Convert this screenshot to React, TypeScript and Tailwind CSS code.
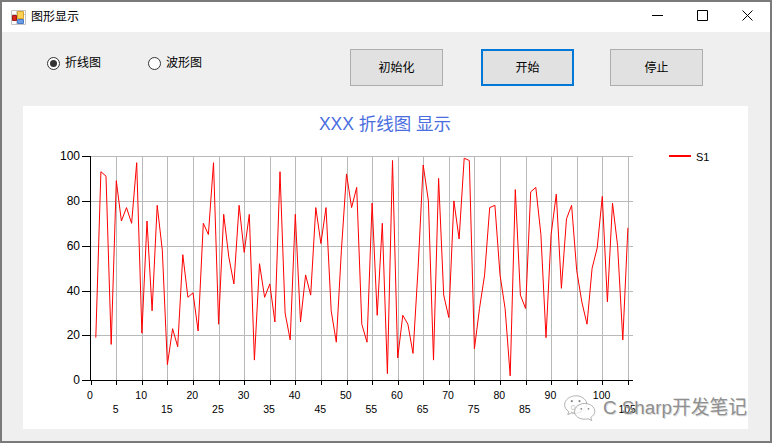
const data = [19,93,91,16,89,71,77,70,97,21,71,31,78,58,7,23,15,56,37,39,22,70,65,97,25,74,55,43,78,57,74,9,52,37,43,26,93,30,18,74,26,47,38,77,61,77,31,17,58,92,77,86,25,17,79,29,70,3,98,10,29,25,12,50,96,80,9,90,38,28,80,63,99,98,14,32,47,77,78,47,32,2,85,38,32,84,86,65,19,65,83,41,72,78,49,35,25,50,59,82,35,79,60,18,68];

const X0 = 90.7;
const UX = 5.116;
const Y0 = 380.3;
const UY = 2.243;
const px = (v: number) => X0 + v * UX;
const py = (v: number) => Y0 - v * UY;
const font = '"Liberation Sans", Arial, sans-serif';

function Chart() {
  const xs = Array.from({ length: 22 }, (_, i) => i * 5);
  const ys = [0, 20, 40, 60, 80, 100];
  return (
    <svg width="725" height="323" viewBox="23 106 725 323" className="block">
      <text x="385" y="129.500" textAnchor="middle" fontSize="17.500" fill="#4a6ee0" style={{ fontFamily: '"Liberation Sans", "Noto Sans CJK SC", sans-serif' }}>XXX 折线图 显示</text>
      {xs.slice(1).map((v) => (
        <line key={v} x1={Math.round(px(v)) + 0.5} x2={Math.round(px(v)) + 0.5} y1={156} y2={380} stroke="#b9b9b9" shapeRendering="crispEdges" />
      ))}
      {ys.slice(1).map((v) => (
        <line key={v} x1={91} x2={632.5} y1={Math.round(py(v)) + 0.5} y2={Math.round(py(v)) + 0.5} stroke="#b9b9b9" shapeRendering="crispEdges" />
      ))}
      <line x1={90.5} x2={90.5} y1={156} y2={381} stroke="#000" shapeRendering="crispEdges" />
      <line x1={90} x2={632.5} y1={380.5} y2={380.5} stroke="#000" shapeRendering="crispEdges" />
      {ys.map((v) => (
        <g key={v}>
          <line x1={82} x2={90} y1={Math.round(py(v)) + 0.5} y2={Math.round(py(v)) + 0.5} stroke="#000" shapeRendering="crispEdges" />
          <text x={80} y={Math.round(py(v)) + 3.5} textAnchor="end" fontSize="12" fill="#000" style={{ fontFamily: font }}>{v}</text>
        </g>
      ))}
      {xs.map((v, i) => (
        <g key={v}>
          <line x1={Math.round(px(v)) + 0.5} x2={Math.round(px(v)) + 0.5} y1={381} y2={385} stroke="#000" shapeRendering="crispEdges" />
          <text x={px(v) - 0.7} y={i % 2 === 0 ? 399 : 413} textAnchor="middle" fontSize="10.500" fill="#000" style={{ fontFamily: font }}>{v}</text>
        </g>
      ))}
      <polyline fill="none" stroke="#ff0000" strokeWidth="1" points={data.map((v, i) => `${px(i + 1).toFixed(1)},${py(v).toFixed(1)}`).join(' ')} />
      <line x1={669} x2={691} y1={156} y2={156} stroke="#ff0000" strokeWidth="2" />
      <text x={696} y={161} fontSize="11" fill="#000" style={{ fontFamily: font }}>S1</text>
    </svg>
  );
}

function Radio({ checked, label }: { checked?: boolean; label: string }) {
  return (
    <div className="flex items-center gap-[5px]">
      <span className="w-[13px] h-[13px] rounded-full border border-[#333333] bg-white flex items-center justify-center">
        {checked && <span className="w-[7px] h-[7px] rounded-full bg-[#333333]" />}
      </span>
      <span className="text-[12px] leading-[16px] text-black">{label}</span>
    </div>
  );
}

function Btn({ label, focus, className }: { label: string; focus?: boolean; className?: string }) {
  return (
    <button className={(focus
      ? 'w-[93px] h-[37px] bg-[#e1e1e1] border-2 border-[#0078d7] text-[12px] text-black '
      : 'w-[93px] h-[37px] bg-[#e1e1e1] border border-[#adadad] text-[12px] text-black ') + (className ?? '')}>{label}</button>
  );
}

export default function App() {
  return (
    <div className="relative w-[772px] h-[443px] flex flex-col border-2 border-[#7a7a7a] bg-[#efefef] overflow-hidden font-['Liberation_Sans','Noto_Sans_CJK_SC',sans-serif]">
      <div className="h-[30px] bg-white flex items-center pl-[9px] shrink-0">
        <svg width="15" height="15" viewBox="0 0 15 15" className="mr-[5px]">
          <path d="M0.5 0.5H14.5V14.5H0.5Z" fill="#ffffff" stroke="#c4c4c4" />
          <path d="M5.5 1V14M1 4.500H14" fill="none" stroke="#d0d0d0" />
          <path d="M6.500 1.500H12.500V8.500H6.500Z" fill="#ffd257" stroke="#d6a42c" />
          <path d="M1.500 5.500H5.500V10.500H1.500Z" fill="#d9261c" stroke="#9c1c14" />
          <path d="M6.500 9.500H12.500V13.500H6.500Z" fill="#6c9ee8" stroke="#4a78c0" />
        </svg>
        <span className="text-[12px] leading-[16px] text-black">图形显示</span>
      </div>
      <div className="h-[74px] shrink-0 flex items-start">
        <div className="flex gap-[47px] pl-[45px] pt-[23px] w-[348px]">
          <Radio checked label="折线图" />
          <Radio label="波形图" />
        </div>
        <div className="flex pt-[17px]">
          <Btn label="初始化" />
          <Btn label="开始" focus className="ml-[38px]" />
          <Btn label="停止" className="ml-[36px]" />
        </div>
      </div>
      <div className="ml-[21px] w-[725px] h-[323px] bg-white shrink-0">
        <Chart />
      </div>
      <div className="absolute left-[561px] top-[392px] flex items-center gap-[7px] text-[#8f8f8f] text-[18.8px] leading-[27px] whitespace-nowrap [text-shadow:1px_1px_0_rgba(150,150,150,0.35)]">
        <svg width="33" height="27" viewBox="0 0 36 30" fill="none" stroke="#a8a8a8" strokeWidth="1">
          <path d="M14 2C7 2 1.500 6.500 1.500 12C1.500 15 3 17.500 6 19.500L5 23L9 21C10.500 21.500 12 21.800 13.500 21.800C18 21.800 26 16 26 10C25 5.500 20 2 14 2Z" fill="rgba(255,255,255,0.8)" />
          <path d="M24 10.500C17.500 10.500 12.500 14.500 12.500 19.500C12.500 24.500 17.500 28 24 28C25.500 28 26.500 27.800 27.500 27.500L31.500 29.500L30.500 26C33 24.500 35 22 35 19.500C35 14.500 30 10.500 24 10.500Z" fill="rgba(255,255,255,0.8)" />
          <circle cx="9.500" cy="8" r="1.200" fill="#888" stroke="none" />
          <circle cx="18" cy="8" r="1.200" fill="#888" stroke="none" />
          <circle cx="20" cy="16.500" r="1" fill="#888" stroke="none" />
          <circle cx="28" cy="16.500" r="1" fill="#888" stroke="none" />
        </svg>
        <span>C Sharp开发笔记</span>
      </div>
      <div className="absolute right-[17px] top-[8px] flex items-center gap-[34px]">
        <svg width="11" height="11" viewBox="0 0 11 11"><path d="M0 5.500H11" stroke="#000" /></svg>
        <svg width="11" height="11" viewBox="0 0 11 11"><path d="M0.500 0.500H10.500V10.500H0.500Z" fill="none" stroke="#000" /></svg>
        <svg width="11" height="11" viewBox="0 0 11 11"><path d="M0.500 0.500L10.500 10.500M10.500 0.500L0.500 10.500" fill="none" stroke="#000" /></svg>
      </div>
    </div>
  );
}
